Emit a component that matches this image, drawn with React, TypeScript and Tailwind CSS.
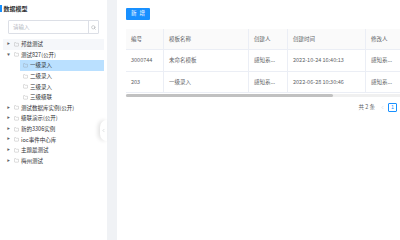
import { ChevronLeft, Search, Folder } from 'lucide-react'

const FONT = 'font-["Noto_Sans_CJK_SC","Noto_Sans",sans-serif]'

interface TreeNode {
  label: string
  open?: boolean
  hover?: boolean
  children?: { label: string; active?: boolean }[]
}

const TREE: TreeNode[] = [
  { label: '邦益测试', hover: true },
  {
    label: '测试827(公开)',
    open: true,
    children: [
      { label: '一级录入', active: true },
      { label: '二级录入' },
      { label: '三级录入' },
      { label: '三级级联' },
    ],
  },
  { label: '测试数据库实例(公开)' },
  { label: '级联演示(公开)' },
  { label: '新的3306实例' },
  { label: 'ioc事件中心库' },
  { label: '主题最测试' },
  { label: '梅州测试' },
]

const ROWS = [
  { id: '3000744', name: '未命名模板', creator: '感知系...', time: '2022-10-24 16:40:13', editor: '感知系...' },
  { id: '203', name: '一级录入', creator: '感知系...', time: '2022-06-28 10:30:46', editor: '感知系...' },
]

function Sidebar() {
  return (
    <div className="relative w-[107px] shrink-0 bg-white">
      {/* Title */}
      <div className="flex items-center h-[14px] mt-[1px]">
        <span className="w-[1.5px] h-[7px] bg-[#1890ff]" />
        <span className="ml-[2px] text-[6px] font-bold text-[#303133]">数据模型</span>
      </div>

      {/* Search */}
      <div className="mx-[8px] mt-[5px] flex h-[14px] items-center border border-[#dcdfe6] rounded-[1px]">
        <span className="flex-1 pl-[4px] text-[5.5px] text-[#b4b8bf]">请输入</span>
        <span className="flex h-full w-[10px] items-center justify-center border-l border-[#dcdfe6]">
          <Search size={5} className="text-[#909399]" strokeWidth={2} />
        </span>
      </div>

      {/* Tree */}
      <div className="mt-[5px] px-[3px]">
        {TREE.map((n) => (
          <div key={n.label}>
            <div
              className={`flex h-[10.6px] items-center pl-[2px] ${n.hover ? 'bg-[#f5f7fa]' : ''}`}
            >
              <span className="flex w-[7px] justify-center text-[3px] text-[#606266]">
                {n.open ? '▼' : '▶'}
              </span>
              <Folder size={5} strokeWidth={1.5} className="ml-[2px] text-[#8c8c8c]" />
              <span className="ml-[2px] text-[5.5px] text-[#303133] whitespace-nowrap">{n.label}</span>
            </div>
            {n.children?.map((c) => (
              <div
                key={c.label}
                className={`ml-[17px] flex h-[10.6px] items-center pl-[3px] ${c.active ? 'bg-[#bae0ff]' : ''}`}
              >
                <Folder size={5} strokeWidth={1.5} className="text-[#8c8c8c]" />
                <span className="ml-[2px] text-[5.5px] text-[#303133]">{c.label}</span>
              </div>
            ))}
          </div>
        ))}
      </div>

      {/* Collapse handle */}
      <div className="absolute right-0 top-[120px] flex h-[21px] w-[7px] items-center justify-center rounded-l-full bg-white shadow-[-2px_0_4px_rgba(0,0,0,0.12)]">
        <ChevronLeft size={5} strokeWidth={2} className="text-[#b0b3b8]" />
      </div>
    </div>
  )
}

function Main() {
  const cols = [
    { key: 'id', title: '编号', w: 'w-[38px]' },
    { key: 'name', title: '模板名称', w: 'w-[85px]' },
    { key: 'creator', title: '创建人', w: 'w-[39px]' },
    { key: 'time', title: '创建时间', w: 'w-[78px]' },
    { key: 'editor', title: '修改人', w: 'w-[60px]' },
  ] as const

  return (
    <div className="flex-1 min-w-0 overflow-hidden bg-white pl-[9px] pt-[8px]">
      <button className="flex h-[12px] w-[24px] items-center justify-center gap-[3px] bg-[#1890ff] text-[5.5px] leading-none text-white rounded-[1px]">
        <span>新</span>
        <span>增</span>
      </button>

      <div className="mt-[9px] w-[300px]">
        <div className="flex h-[21px] bg-[#fafafa] border-b border-[#ebeef5]">
          {cols.map((c, i) => (
            <div
              key={c.key}
              className={`${c.w} shrink-0 flex items-center pl-[5px] text-[5.5px] text-[#606266] ${i < cols.length - 1 ? 'border-r border-[#ebeef5]' : ''}`}
            >
              {c.title}
            </div>
          ))}
        </div>
        {ROWS.map((r) => (
          <div key={r.id} className="flex h-[21.5px] border-b border-[#ebeef5]">
            {cols.map((c, i) => (
              <div
                key={c.key}
                className={`${c.w} shrink-0 flex items-center pl-[5px] text-[5.5px] text-[#606266] whitespace-nowrap ${i < cols.length - 1 ? 'border-r border-[#ebeef5]' : ''}`}
              >
                {r[c.key]}
              </div>
            ))}
          </div>
        ))}
        {/* Horizontal scrollbar */}
        <div className="mt-[1px] h-[3px] bg-[#f0f0f0]">
          <div className="h-full w-[207px] bg-[#c1c1c1] rounded-full" />
        </div>
      </div>

      {/* Pagination */}
      <div className="mt-[6px] flex items-center justify-end pr-[3px]">
        <span className="text-[5.5px] leading-none text-[#606266]">共 2 条</span>
        <ChevronLeft size={5} strokeWidth={2} className="ml-[5px] text-[#c0c4cc]" />
        <span className="ml-[3px] flex h-[9px] w-[9px] items-center justify-center border border-[#1890ff] text-[5.5px] leading-none text-[#1890ff] rounded-[1px]">
          1
        </span>
      </div>
    </div>
  )
}

export default function App() {
  return (
    <div className={`flex h-[240px] w-[400px] overflow-hidden bg-white ${FONT}`}>
      <Sidebar />
      <div className="w-[10px] shrink-0 bg-[#f0f2f5]" />
      <Main />
    </div>
  )
}
